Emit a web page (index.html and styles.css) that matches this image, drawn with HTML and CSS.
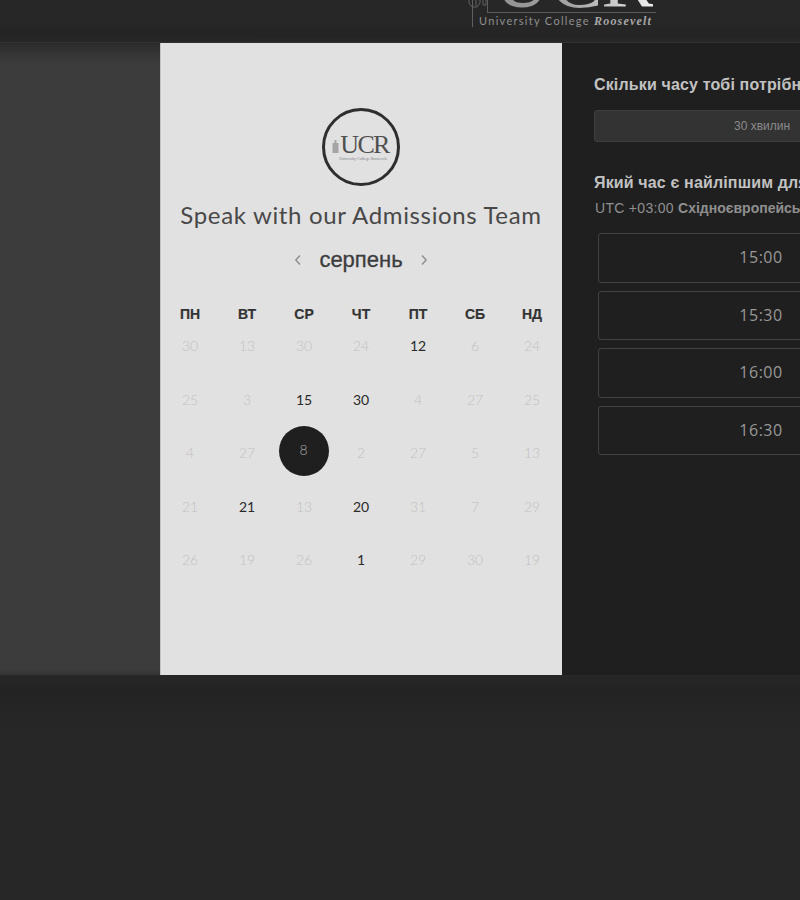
FILE: index.html
```html
<!DOCTYPE html>
<html lang="uk">
<head>
<meta charset="UTF-8" />
<meta name="viewport" content="width=device-width, initial-scale=1" />
<title>Speak with our Admissions Team</title>
<link rel="stylesheet" href="styles.css">
</head>
<body>

<header class="top-bar">
  <div class="brand">
    <svg class="brand-tower" width="22" height="28" viewBox="0 0 22 28" fill="none" stroke="#606060" stroke-width="1">
      <path d="M4.500 0V27" />
      <path d="M1 0V3L4 7H9L12 3V0" />
      <path d="M8 0V6" />
      <path d="M15 0V5H18V0" />
    </svg>
    <div class="brand-big">UCR</div>
    <div class="brand-rule"></div>
    <div class="brand-line">University College <span class="brand-script">Roosevelt</span></div>
  </div>
</header>

<main class="stage">
  <section class="calendar-card">
    <div class="logo-ring">
      <svg class="logo-tower" width="7" height="13" viewBox="0 0 7 13" fill="#a5a5a5">
        <path d="M2.500 0H4.500V3H6.500V13H0.500V3H2.500Z" />
      </svg>
      <span class="logo-text">UCR</span>
      <span class="logo-small">University College Roosevelt</span>
    </div>
    <h1>Speak with our Admissions Team</h1>

    <div class="month-row">
      <svg width="8" height="12" viewBox="0 0 8 12" fill="none" stroke="#8a8a8a" stroke-width="1.3"><path d="M6 1.500L1.800 6L6 10.500" /></svg>
      <span class="month-name">серпень</span>
      <svg width="8" height="12" viewBox="0 0 8 12" fill="none" stroke="#8a8a8a" stroke-width="1.3"><path d="M2 1.500L6.200 6L2 10.500" /></svg>
    </div>

    <div class="week-head">
      <div>ПН</div><div>ВТ</div><div>СР</div><div>ЧТ</div><div>ПТ</div><div>СБ</div><div>НД</div>
    </div>

    <div class="days">
      <div>30</div><div>13</div><div>30</div><div>24</div><div class="on">12</div><div>6</div><div>24</div>
      <div>25</div><div>3</div><div class="on">15</div><div class="on">30</div><div>4</div><div>27</div><div>25</div>
      <div>4</div><div>27</div><div class="picked"><span>8</span></div><div>2</div><div>27</div><div>5</div><div>13</div>
      <div>21</div><div class="on">21</div><div>13</div><div class="on">20</div><div>31</div><div>7</div><div>29</div>
      <div>26</div><div>19</div><div>26</div><div class="on">1</div><div>29</div><div>30</div><div>19</div>
    </div>
  </section>

  <section class="time-panel">
    <h2>Скільки часу тобі потрібно?</h2>
    <div class="duration">30 хвилин</div>

    <h2 class="best-time">Який час є найліпшим для тебе?</h2>
    <p class="zone">UTC +03:00 <b>Східноєвропейський час</b></p>

    <div class="slots">
      <div class="slot">15:00</div>
      <div class="slot">15:30</div>
      <div class="slot">16:00</div>
      <div class="slot">16:30</div>
    </div>
  </section>
</main>

</body>
</html>
```

FILE: styles.css
```css
html {
  height: 900px;
  overflow: hidden;
}

body {
  margin: 0;
  width: 964px;
  height: 900px;
  /* soft shadow under the stage */
  background: linear-gradient(#272727 675px, #232323 690px, #262626 715px, #272727 740px);
  font-family: 'Liberation Sans', Arial, sans-serif;
}

/* header with the cropped logo */
.top-bar {
  height: 43px;
  box-sizing: border-box;
  border-bottom: 1px solid #313131;
  background: linear-gradient(#272727 20px, #242424 36px, #272727);
  padding-left: 468px;
  overflow: hidden;
}

.brand {
  width: 190px;
  height: 28px;
  position: relative;
}

.brand-tower {
  position: absolute;
  left: 0;
  top: 0;
}

.brand-big {
  position: absolute;
  left: 25px;
  bottom: 18px;
  font-family: 'Liberation Serif', serif;
  font-size: 80px;
  line-height: 60px;
  letter-spacing: -1.5px;
  background: linear-gradient(90deg, #8f8f8f, #a5a5a5 50%, #f0f0f0);
  -webkit-background-clip: text;
  background-clip: text;
  color: transparent;
}

.brand-rule {
  position: absolute;
  left: 19px;
  top: 0;
  width: 168px;
  height: 12px;
  border-left: 1px solid #5c5c5c;
  border-bottom: 1px solid #5c5c5c;
}

.brand-line {
  position: absolute;
  left: 11px;
  top: 14px;
  white-space: nowrap;
  font-family: 'Lato', sans-serif;
  font-size: 11px;
  line-height: 14px;
  letter-spacing: 1.3px;
  color: #8f8f8f;
}

.brand-script {
  font-family: 'Liberation Serif', serif;
  font-style: italic;
  font-weight: 700;
  font-size: 12px;
  letter-spacing: 1.2px;
  color: #a8a8a8;
}

.stage {
  height: 632px;
  padding-left: 160px;
  display: flex;
  background: linear-gradient(#2b2b2b, #383838 14px, #3c3c3c 24px, #3c3c3c 626px, #343434);
}

.calendar-card {
  flex: 0 0 402px;
  background: #e1e1e1;
  box-sizing: border-box;
  border-left: 1px solid #c2c2c2;
  padding: 65px 1px 0 0;
  display: flex;
  flex-direction: column;
  align-items: center;
}

.logo-ring {
  width: 78px;
  height: 78px;
  box-sizing: border-box;
  border: 3px solid #2e2e2e;
  border-radius: 50%;
  position: relative;
  text-align: center;
}

.logo-text {
  display: block;
  margin-top: 23px;
  margin-left: 7px;
  font-family: 'Liberation Serif', serif;
  font-size: 26px;
  font-weight: 400;
  line-height: 22px;
  letter-spacing: -1.7px;
  color: #505050;
}

.logo-tower {
  position: absolute;
  left: 7px;
  top: 29px;
}

.logo-small {
  display: block;
  margin-left: 4px;
  font-family: 'Liberation Serif', serif;
  font-size: 4px;
  line-height: 5px;
  white-space: nowrap;
  color: #808080;
}

h1 {
  margin: 13px 0 0;
  font-family: 'Lato', sans-serif;
  font-weight: 400;
  font-size: 24px;
  line-height: 32px;
  letter-spacing: 0.65px;
  white-space: nowrap;
  color: #484848;
}

.month-row {
  margin-top: 14px;
  height: 30px;
  display: flex;
  align-items: center;
  justify-content: center;
  gap: 17px;
}

.month-name {
  font-size: 22px;
  color: #3c3c3c;
  -webkit-text-stroke: 0.3px #3c3c3c;
}

.week-head {
  margin-top: 31px;
  width: 399px;
  display: grid;
  grid-template-columns: repeat(7, 57px);
  text-align: center;
  font-size: 14px;
  font-weight: 700;
  line-height: 16px;
  color: #333;
  -webkit-text-stroke: 0.2px #333;
}

.days {
  margin-top: 14px;
  width: 399px;
  display: grid;
  grid-template-columns: repeat(7, 57px);
  grid-auto-rows: 53.5px;
  text-align: center;
  font-family: 'Lato', sans-serif;
  font-size: 14px;
  font-weight: 300;
  color: #c2c2c2;
}

.days > div {
  height: 20px;
  line-height: 19px;
}

.days .on {
  color: #2a2a2a;
  font-weight: 400;
}

.days .picked {
  position: relative;
}

.days .picked span {
  position: absolute;
  left: 3px;
  top: -17px;
  width: 50px;
  height: 50px;
  line-height: 48px;
  border-radius: 50%;
  background: #1f1f1f;
  color: #a8a8a8;
}

.time-panel {
  flex: 0 0 402px;
  box-sizing: border-box;
  background: #1f1f1f;
  padding: 32px 0 0 32px;
}

h2 {
  margin: 0;
  font-size: 16px;
  line-height: 20px;
  font-weight: 700;
  letter-spacing: 0.15px;
  white-space: nowrap;
  color: #c2c2c2;
}

.duration {
  margin-top: 15px;
  width: 336px;
  height: 32px;
  box-sizing: border-box;
  border: 1px solid #3f3f3f;
  border-radius: 3px;
  background: #333;
  text-align: center;
  line-height: 30px;
  font-size: 12px;
  color: #8a8a8a;
}

.best-time {
  margin-top: 31px;
}

.zone {
  margin: 6px 0 0 1px;
  font-size: 14px;
  line-height: 18px;
  letter-spacing: 0.3px;
  white-space: nowrap;
  color: #8f8f8f;
}

.zone b {
  letter-spacing: 0;
}

.slots {
  margin: 16px 0 0 4px;
  width: 326px;
  display: flex;
  flex-direction: column;
  gap: 8px;
}

.slot {
  height: 49.5px;
  box-sizing: border-box;
  border: 1px solid #424242;
  border-radius: 3px;
  text-align: center;
  line-height: 46px;
  font-family: 'Open Sans', sans-serif;
  font-size: 16px;
  letter-spacing: 0.5px;
  color: #989898;
}
```
